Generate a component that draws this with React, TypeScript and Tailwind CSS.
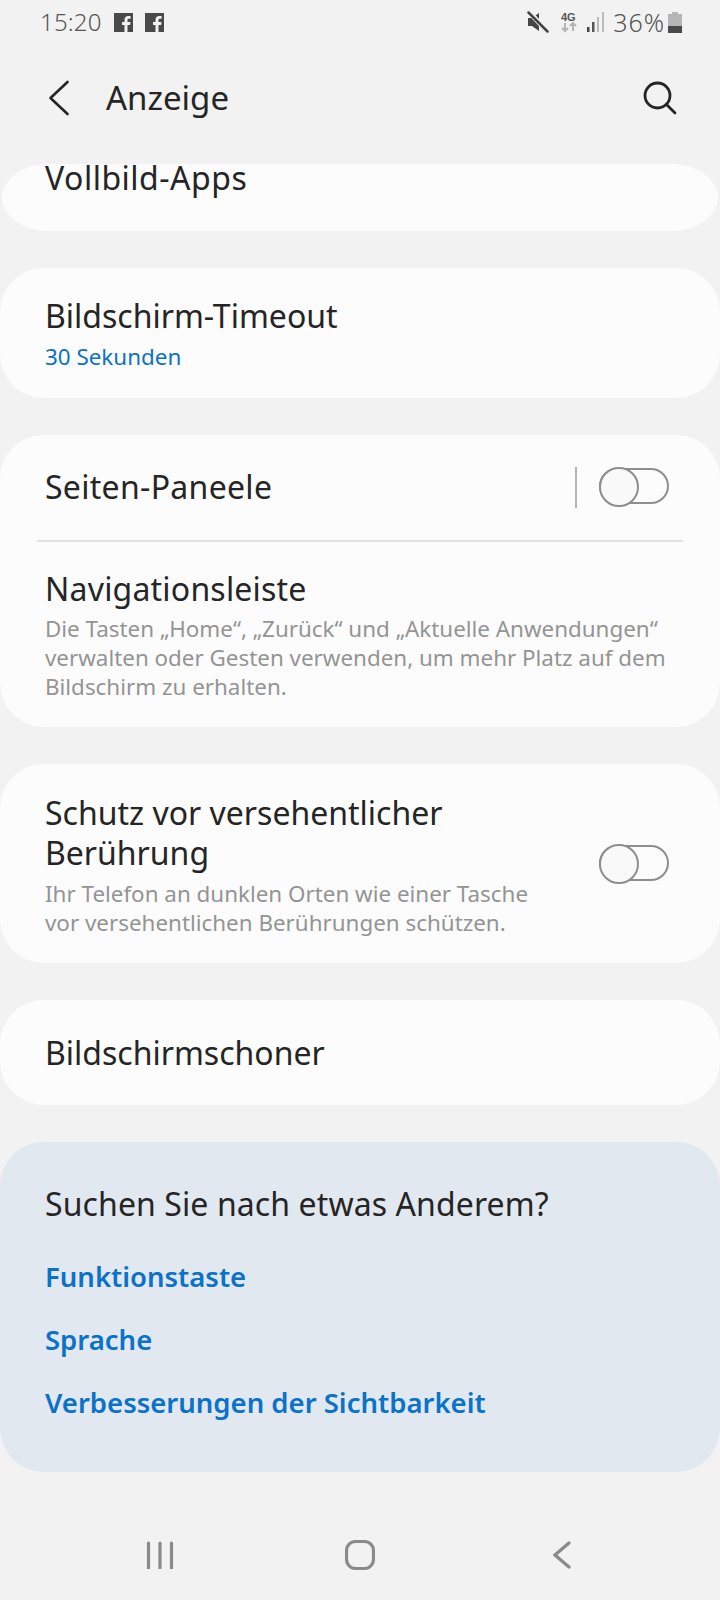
function Toggle() {
  return (
    <div className="relative mt-[-2px] h-[36px] w-[70px] rounded-full border-2 border-[#8e8e8e]">
      <div className="absolute left-[-2px] top-[-3px] h-[40px] w-[40px] rounded-full border-2 border-[#8e8e8e] bg-[#f9f9f9]" />
    </div>
  )
}

function FbIcon() {
  return (
    <svg width="19" height="19" viewBox="0 0 19 19">
      <path
        fillRule="evenodd"
        fill="#4a4a4a"
        d="M0 0h19v19h-5.500v-7h2.600l.4-3h-3V7.200c0-.9.300-1.400 1.500-1.400h1.600V3.100c-.3 0-1.200-.1-2.300-.1-2.300 0-3.800 1.400-3.800 3.900V9H8v3h2.500v7H0z"
      />
    </svg>
  )
}

function StatusBar() {
  return (
    <div className="flex h-[44px] items-center justify-between pl-[40px] pr-[38px] font-normal text-[#555555]">
      <div className="flex items-center">
        <span className="text-[24px] font-[350] leading-[44px] tracking-[0.2px]">15:20</span>
        <div className="ml-[12px] flex gap-[12px]">
          <FbIcon />
          <FbIcon />
        </div>
      </div>
      <div className="flex items-center">
        <svg width="22" height="22" viewBox="0 0 22 22" className="mr-[12px]">
          <path d="M1 7h4l7-5v18l-7-5H1z" fill="#444444" />
          <path d="M2 1l19 20" stroke="#f2f2f2" strokeWidth="5" />
          <path d="M1.500 1.500l19 19" stroke="#444444" strokeWidth="2.500" strokeLinecap="round" />
        </svg>
        <svg width="16" height="22" viewBox="0 0 16 22" className="mr-[9px]">
          <text x="0" y="10" fontSize="11" fontWeight="700" fill="#555555" fontFamily="Liberation Sans, sans-serif">4G</text>
          <path d="M4 12v8M1 17l3 3 3-3" stroke="#b5b5b5" strokeWidth="2" fill="none" />
          <path d="M12 20v-8M9 15l3-3 3 3" stroke="#b5b5b5" strokeWidth="2" fill="none" />
        </svg>
        <svg width="19" height="20" viewBox="0 0 19 20" className="mr-[8px]">
          <rect x="1" y="15" width="2.500" height="5" fill="#444444" />
          <rect x="6" y="10" width="2.500" height="10" fill="#555555" />
          <rect x="11" y="5" width="2" height="15" fill="#bbbbbb" />
          <rect x="16" y="0" width="2" height="20" fill="#bbbbbb" />
        </svg>
        <span className="text-[25px] font-[350] leading-[44px] tracking-[1px]">36%</span>
        <svg width="14" height="21" viewBox="0 0 14 21" className="ml-[3px]">
          <rect x="4" y="0" width="6" height="3" fill="#b5b5b5" />
          <rect x="0" y="2" width="14" height="12" fill="#b5b5b5" />
          <rect x="0" y="14" width="14" height="7" fill="#4a4a4a" />
        </svg>
      </div>
    </div>
  )
}

function Header() {
  return (
    <div className="flex h-[106px] items-center justify-between pl-[48px] pr-[43px] pt-[2px] text-[#252525]">
      <div className="flex items-center">
        <svg width="22" height="36" viewBox="0 0 22 36" fill="none" stroke="#252525" strokeWidth="2.600" strokeLinecap="round" strokeLinejoin="round">
          <path d="M19.500 2L2.500 18l17 16" />
        </svg>
        <span className="ml-[36px] text-[33px]">Anzeige</span>
      </div>
      <svg width="34" height="34" viewBox="0 0 34 34" fill="none" stroke="#252525" strokeWidth="2.800" strokeLinecap="round">
        <circle cx="14.500" cy="14.500" r="12.500" />
        <path d="M23.500 23.500L32 32" />
      </svg>
    </div>
  )
}

function Card({ className, children }: { className?: string; children: React.ReactNode }) {
  return <div className={`rounded-[44px] bg-[#fcfcfc] ${className ?? ""}`}>{children}</div>
}

export default function App() {
  return (
    <div className="flex h-[1600px] w-[720px] flex-col overflow-hidden bg-[#f2f2f2] font-[370] text-[#252525] [font-family:'Noto_Sans',sans-serif]">
      <StatusBar />
      <Header />
      <div className="flex flex-col gap-[37px] pt-[14px]">
        <div className="mx-[2px] h-[67px] rounded-[46px/33.5px] bg-[#fcfcfc] pl-[43px]">
          <div className="mt-[-10px] h-[77px] overflow-hidden">
            <p className="text-[32px] leading-[48px] tracking-[0.5px]">Vollbild-Apps</p>
          </div>
        </div>

        <Card className="flex h-[130px] flex-col justify-center pl-[45px]">
          <p className="pt-[2px] text-[32px] leading-[44px]">Bildschirm-Timeout</p>
          <p className="mt-[2px] text-[22.4px] leading-[34px] text-[#0a72c8]">30 Sekunden</p>
        </Card>

        <Card className="h-[292px]">
          <div className="flex h-[105px] items-center justify-between pb-[1px] pl-[45px] pr-[51px]">
            <p className="text-[32px] tracking-[0.3px]">Seiten-Paneele</p>
            <div className="flex items-center gap-[22px]">
              <div className="h-[41px] w-[2px] bg-[#b4b4b4]" />
              <Toggle />
            </div>
          </div>
          <div className="mx-[37px] h-[2px] bg-[#e3e3e3]" />
          <div className="pl-[45px] pr-[40px] pt-[25px]">
            <p className="mb-[3px] text-[32px] leading-[44px] tracking-[0.2px]">Navigationsleiste</p>
            <p className="text-[22.4px] leading-[29px] text-[#949494]">
              Die Tasten „Home“, „Zurück“ und „Aktuelle Anwendungen“ verwalten oder Gesten verwenden, um mehr Platz auf dem Bildschirm zu erhalten.
            </p>
          </div>
        </Card>

        <Card className="flex h-[199px] items-center justify-between pl-[45px] pr-[51px]">
          <div className="w-[510px] pt-[3px]">
            <p className="mb-[6px] text-[32px] leading-[40px]">Schutz vor versehentlicher Berührung</p>
            <p className="text-[22.4px] leading-[29px] text-[#949494]">
              Ihr Telefon an dunklen Orten wie einer Tasche vor versehentlichen Berührungen schützen.
            </p>
          </div>
          <Toggle />
        </Card>

        <Card className="flex h-[105px] items-center pl-[45px]">
          <p className="text-[32px]">Bildschirmschoner</p>
        </Card>

        <div className="h-[330px] rounded-[44px] bg-[#e2e8f0] pl-[45px] pt-[38px]">
          <p className="text-[32px] leading-[48px] tracking-[0.1px]">Suchen Sie nach etwas Anderem?</p>
          <div className="mt-[27px] flex flex-col gap-[19px] text-[27.5px] font-semibold leading-[44px] text-[#0a72c8]">
            <p>Funktionstaste</p>
            <p>Sprache</p>
            <p>Verbesserungen der Sichtbarkeit</p>
          </div>
        </div>
      </div>

      <div className="mt-[36px] flex items-center pl-[146px] pt-[32px]">
        <svg width="28" height="28" viewBox="0 0 28 28" fill="none" stroke="#8a8a8a" strokeWidth="3.200" strokeLinecap="round">
          <path d="M2.500 2v25M14 2v25M25.500 2v25" />
        </svg>
        <svg width="30" height="30" viewBox="0 0 30 30" fill="none" stroke="#8a8a8a" strokeWidth="3.200" className="ml-[171px]">
          <rect x="1.500" y="1.500" width="27" height="27" rx="9" />
        </svg>
        <svg width="18" height="28" viewBox="0 0 18 28" fill="none" stroke="#8a8a8a" strokeWidth="3.200" strokeLinecap="round" className="ml-[178px]">
          <path d="M16 2L2 14l14 12" />
        </svg>
      </div>
    </div>
  )
}
